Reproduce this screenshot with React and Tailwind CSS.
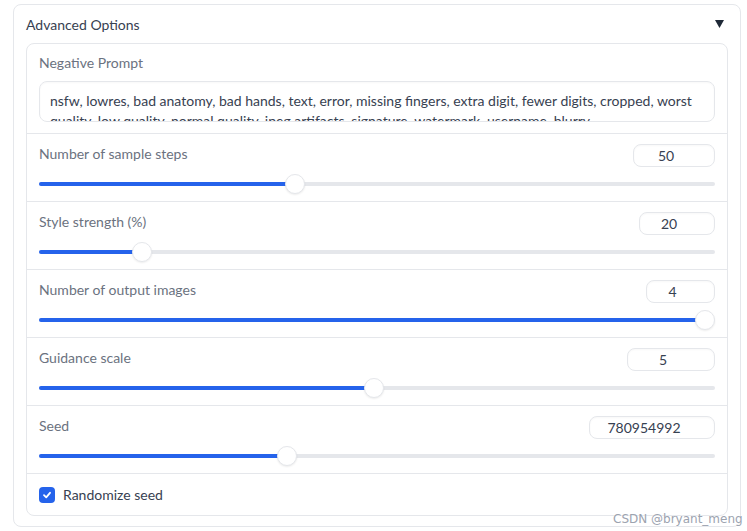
import React from "react";

const font = { fontFamily: '"Lato", "Noto Sans", sans-serif' };

const sliders = [
  { label: "Number of sample steps", value: "50", w: "w-[82px]", frac: 0.3756 },
  { label: "Style strength (%)", value: "20", w: "w-[76px]", frac: 0.142 },
  { label: "Number of output images", value: "4", w: "w-[69px]", frac: 1 },
  { label: "Guidance scale", value: "5", w: "w-[88px]", frac: 0.495 },
  { label: "Seed", value: "780954992", w: "w-[126px]", frac: 0.363 },
];

function SliderRow({ label, value, w, frac }) {
  return (
    <div className="border-t border-[#e5e7eb] px-3 pt-[10px] pb-[7px]">
      <div className="flex h-[24px] items-start justify-between">
        <span className="text-[14px] leading-[20px] text-[#6b7280]">{label}</span>
        <div
          className={`${w} flex h-[23px] items-center justify-center rounded-lg border border-[#e5e7eb] pl-2 pr-6 text-[14px] text-[#374151] shadow-[inset_0_1px_2px_rgba(0,0,0,0.03)]`}
        >
          {value}
        </div>
      </div>
      <div className="relative mt-[6px] h-[20px]">
        <div className="absolute left-0 right-0 top-[8px] h-[4px] rounded-full bg-[#e5e7eb]" />
        <div
          className="absolute left-0 top-[8px] h-[4px] rounded-full bg-[#2563eb]"
          style={{ width: `calc(${frac} * (100% - 20px) + 10px)` }}
        />
        <div
          className="absolute top-0 h-[20px] w-[20px] rounded-full border border-[#e5e7eb] bg-white shadow-[0_1px_2px_rgba(0,0,0,0.08)]"
          style={{ left: `calc(${frac} * (100% - 20px))` }}
        />
      </div>
    </div>
  );
}

export default function App() {
  return (
    <div className="relative h-[531px] w-[747px] bg-white pl-[13px] pt-[4px]" style={font}>
      <div className="w-[728px] rounded-lg border border-[#e5e7eb] bg-white px-3 pb-[10px]">
        <div className="flex h-[38px] items-center justify-between">
          <span className="text-[14px] text-[#374151]">Advanced Options</span>
          <svg width="9" height="8" viewBox="0 0 9 8" className="mr-[4px]">
            <polygon points="0,0 9,0 4.5,8" fill="#1f2937" />
          </svg>
        </div>
        <div className="overflow-hidden rounded-lg border border-[#e5e7eb] bg-white">
          <div className="px-3 pt-[9px] pb-[11px]">
            <div className="text-[14px] leading-[20px] text-[#6b7280]">Negative Prompt</div>
            <div className="mt-[8px] h-[41px] overflow-hidden rounded-lg border border-[#e5e7eb] pl-[10px] pr-3 pt-[9px] text-[14px] leading-[20px] text-[#374151] shadow-[inset_0_1px_2px_rgba(0,0,0,0.03)]">
              nsfw, lowres, bad anatomy, bad hands, text, error, missing fingers, extra digit, fewer digits, cropped, worst
              quality, low quality, normal quality, jpeg artifacts, signature, watermark, username, blurry
            </div>
          </div>
          {sliders.map((s) => (
            <SliderRow key={s.label} {...s} />
          ))}
          <div className="flex h-[42px] items-center gap-2 border-t border-[#e5e7eb] px-3">
            <div className="flex h-[16px] w-[16px] items-center justify-center rounded-[4px] bg-[#2563eb]">
              <svg width="10" height="10" viewBox="0 0 10 10">
                <path d="M2 5.2 L4.2 7.3 L8 2.8" stroke="white" strokeWidth="1.8" fill="none" strokeLinecap="round" strokeLinejoin="round" />
              </svg>
            </div>
            <span className="text-[14px] text-[#374151]">Randomize seed</span>
          </div>
        </div>
      </div>
      <div
        className="absolute left-[613px] top-[510px] text-[12px] text-[#9ca3af]"
        style={{ fontFamily: '"DejaVu Sans", sans-serif', textShadow: "0 0 2px #fff" }}
      >
        CSDN @bryant_meng
      </div>
    </div>
  );
}
